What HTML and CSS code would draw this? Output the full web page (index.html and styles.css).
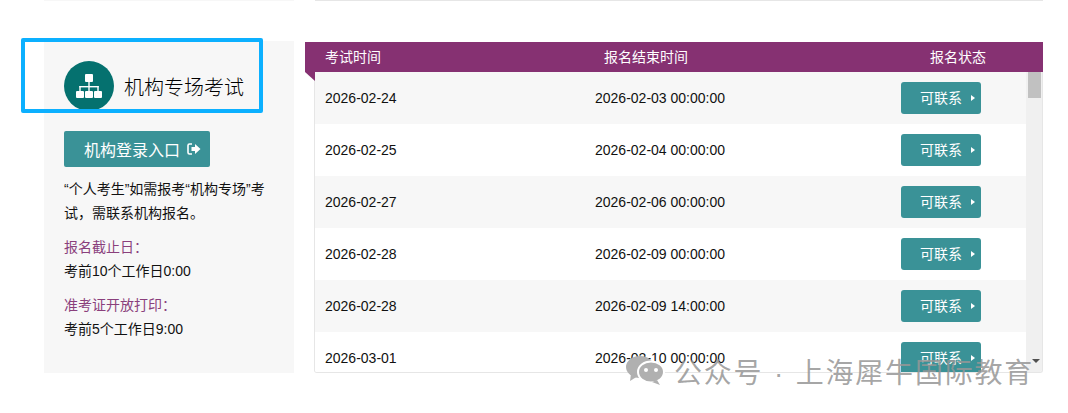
FILE: index.html
```html
<!DOCTYPE html>
<html lang="zh">
<head>
<meta charset="utf-8">
<title>机构专场考试</title>
<link rel="stylesheet" href="styles.css">
</head>
<body>
<div class="page">
  <div class="top-rules"><div class="rule rule-left"></div><div class="rule rule-right"></div></div>
  <div class="content">
    <aside class="side">
      <div class="side-head">
        <span class="side-icon">
          <svg width="26" height="24" viewBox="0 0 26 24"><g fill="#fff"><rect x="9" y="0" width="8" height="8" rx="1"/><rect x="0" y="17" width="8" height="7" rx="1"/><rect x="9" y="17" width="8" height="7" rx="1"/><rect x="18" y="17" width="8" height="7" rx="1"/><rect x="12.300" y="8" width="1.400" height="9"/><rect x="3.300" y="12" width="19.400" height="1.400"/><rect x="3.300" y="12" width="1.400" height="5"/><rect x="21.300" y="12" width="1.400" height="5"/></g></svg>
        </span>
        <h2 class="side-title">机构专场考试</h2>
      </div>
      <a class="login-btn">机构登录入口
        <svg class="login-icon" width="14" height="12" viewBox="0 0 14 12"><path d="M5 1H2.500A1.500 1.500 0 0 0 1 2.500v7A1.500 1.500 0 0 0 2.500 11H5" fill="none" stroke="#fff" stroke-width="1.600"/><path d="M4.500 4H8V1l5.500 5L8 11V8H4.500z" fill="#fff"/></svg>
      </a>
      <p class="note">“个人考生”如需报考“机构专场”考试，需联系机构报名。</p>
      <p class="label">报名截止日：</p>
      <p class="value">考前10个工作日0:00</p>
      <p class="label">准考证开放打印：</p>
      <p class="value">考前5个工作日9:00</p>
    </aside>
    <section class="table-panel">
      <div class="table-head">
        <span class="th th-1">考试时间</span>
        <span class="th th-2">报名结束时间</span>
        <span class="th th-3">报名状态</span>
      </div>
      <div class="table-body">
        <div class="rows">
          <div class="row"><span class="c1">2026-02-24</span><span class="c2">2026-02-03 00:00:00</span><a class="status">可联系<i class="caret"></i></a></div>
          <div class="row"><span class="c1">2026-02-25</span><span class="c2">2026-02-04 00:00:00</span><a class="status">可联系<i class="caret"></i></a></div>
          <div class="row"><span class="c1">2026-02-27</span><span class="c2">2026-02-06 00:00:00</span><a class="status">可联系<i class="caret"></i></a></div>
          <div class="row"><span class="c1">2026-02-28</span><span class="c2">2026-02-09 00:00:00</span><a class="status">可联系<i class="caret"></i></a></div>
          <div class="row"><span class="c1">2026-02-28</span><span class="c2">2026-02-09 14:00:00</span><a class="status">可联系<i class="caret"></i></a></div>
          <div class="row"><span class="c1">2026-03-01</span><span class="c2">2026-02-10 00:00:00</span><a class="status">可联系<i class="caret"></i></a></div>
        </div>
        <div class="scrollbar"><div class="thumb"></div><i class="arrow-down"></i></div>
      </div>
    </section>
  </div>
  <div class="highlight"></div>
  <div class="watermark">
    <svg width="42" height="30" viewBox="0 0 42 30"><g fill="#b0b0b0"><ellipse cx="15" cy="11" rx="14" ry="11"/><path d="M6 18l-1 7 8-5z"/></g><g fill="#b0b0b0" stroke="#fff" stroke-width="2"><ellipse cx="26" cy="16" rx="13" ry="10.500"/></g><path d="M32 24l3 5-8-3z" fill="#b0b0b0"/><circle cx="21" cy="14" r="2" fill="#fff"/><circle cx="31" cy="14" r="2" fill="#fff"/></svg>
    <span class="wm-text">公众号 · 上海犀牛国际教育</span>
  </div>
</div>
</body>
</html>
```
FILE: styles.css
```css
* { box-sizing: border-box; }
html, body { margin: 0; padding: 0; background: #fff; }
body {
  font-family: "Liberation Sans", "Noto Sans CJK SC", sans-serif;
  font-size: 14px;
  color: #111;
}
.page { position: relative; width: 1068px; height: 413px; overflow: hidden; }
.top-rules { display: flex; height: 1px; padding-left: 44px; gap: 21px; }
.rule { height: 1px; background: #eee; }
.rule-left { width: 250px; background: #f7f7f7; }
.rule-right { width: 728px; background: #e6e6e6; }
.content { display: flex; margin-top: 40px; padding-left: 44px; }
.side {
  width: 250px; height: 332px; background: #f7f7f7; padding: 20px 20px 0;
}
.side-head { display: flex; align-items: center; gap: 10px; height: 50px; }
.side-icon {
  width: 50px; height: 50px; border-radius: 50%; background: #05716f;
  display: flex; align-items: center; justify-content: center;
}
.side-title { margin: 0; font-size: 20px; font-weight: 300; color: #000; }
.login-btn {
  display: inline-flex; align-items: center; gap: 7px;
  width: 146px; height: 36px; margin-top: 20px; padding-left: 20px;
  background: #3a9297; color: #fff; font-size: 16px; border-radius: 2px;
}
.login-icon { flex: none; }
.note { margin: 10px 0 0; line-height: 24px; }
.label { margin: 10px 0 0; line-height: 24px; color: #8a3f7c; }
.value { margin: 0; line-height: 24px; }
.table-panel { position: relative; width: 738px; height: 332px; margin-left: 11px; }
.table-head {
  display: flex; align-items: center; height: 30px; margin-top: 1px;
  background: #863172; color: #fff; position: relative;
}
.table-head::after {
  content: ""; position: absolute; left: 0; top: 30px;
  border-top: 9px solid #863172; border-left: 10px solid transparent;
}
.th { position: absolute; top: 6px; line-height: 18px; }
.th-1 { left: 20px; }
.th-2 { left: 299px; }
.th-3 { left: 625px; }
.table-body {
  display: flex; margin-left: 9px; height: 301px;
  border: 1px solid #e6e6e6; border-top: 0; border-radius: 0 0 3px 3px; overflow: hidden;
}
.rows { width: 711px; flex: none; overflow: hidden; }
.row { display: flex; align-items: center; height: 52px; background: #fff; }
.row:nth-child(odd) { background: #f7f7f7; }
.c1 { width: 280px; padding-left: 10px; flex: none; }
.c2 { width: 306px; flex: none; }
.status {
  position: relative; display: block; width: 80px; height: 32px; line-height: 32px;
  padding-left: 19px; background: #3a9297; color: #fff; border-radius: 3px; font-size: 14px;
}
.caret {
  position: absolute; right: 6px; top: 13px;
  border-left: 4px solid #fff; border-top: 3px solid transparent; border-bottom: 3px solid transparent;
}
.scrollbar { position: relative; flex: 1; background: #f0f0f0; }
.thumb { width: 13px; height: 26px; margin-left: 2px; background: #c1c1c1; }
.arrow-down {
  position: absolute; right: 2px; bottom: 9px;
  border-top: 4px solid #505050; border-left: 4px solid transparent; border-right: 4px solid transparent;
}
.highlight {
  position: absolute; left: 21px; top: 38px; width: 242px; height: 75px;
  border: 4px solid #0cb0ff; border-radius: 2px;
}
.watermark {
  position: absolute; left: 625px; top: 354px; display: flex; align-items: center; gap: 7px;
  height: 34px;
}
.wm-text { font-size: 28px; letter-spacing: 1.800px; word-spacing: 1px; color: rgba(150,150,150,.85); white-space: nowrap; font-weight: 400; }
```
